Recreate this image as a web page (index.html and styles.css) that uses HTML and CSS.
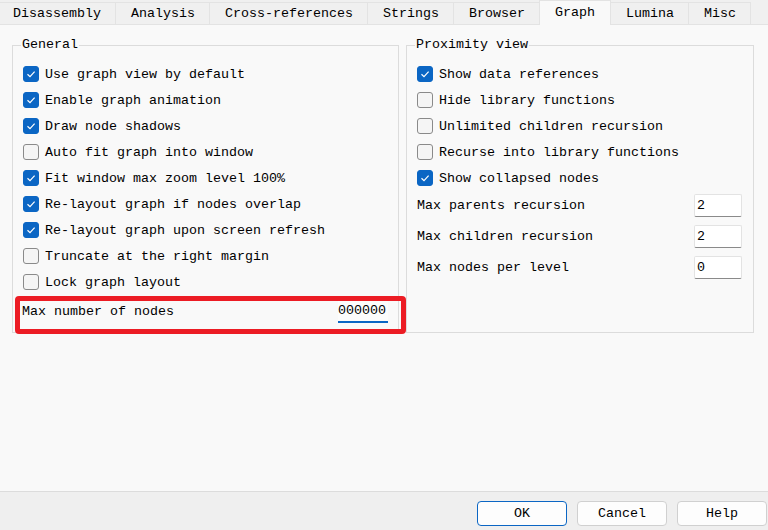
FILE: index.html
```html
<!DOCTYPE html>
<html>
<head>
<meta charset="utf-8">
<link rel="stylesheet" href="styles.css">
</head>
<body>
<div class="dialog">
  <div class="tabs">
    <div class="tab">Disassembly</div>
    <div class="tab">Analysis</div>
    <div class="tab">Cross-references</div>
    <div class="tab">Strings</div>
    <div class="tab">Browser</div>
    <div class="tab active">Graph</div>
    <div class="tab">Lumina</div>
    <div class="tab">Misc</div>
  </div>
  <div class="panel">
    <div class="groups">
      <fieldset class="group">
        <legend>General</legend>
        <div class="rows left-rows">
          <div class="row"><span class="cb on"><svg viewBox="0 0 16 16"><path d="M4.5 8.2 L7 10.6 L11.6 5.6"/></svg></span><span>Use graph view by default</span></div>
          <div class="row"><span class="cb on"><svg viewBox="0 0 16 16"><path d="M4.5 8.2 L7 10.6 L11.6 5.6"/></svg></span><span>Enable graph animation</span></div>
          <div class="row"><span class="cb on"><svg viewBox="0 0 16 16"><path d="M4.5 8.2 L7 10.6 L11.6 5.6"/></svg></span><span>Draw node shadows</span></div>
          <div class="row"><span class="cb"></span><span>Auto fit graph into window</span></div>
          <div class="row"><span class="cb on"><svg viewBox="0 0 16 16"><path d="M4.5 8.2 L7 10.6 L11.6 5.6"/></svg></span><span>Fit window max zoom level 100%</span></div>
          <div class="row"><span class="cb on"><svg viewBox="0 0 16 16"><path d="M4.5 8.2 L7 10.6 L11.6 5.6"/></svg></span><span>Re-layout graph if nodes overlap</span></div>
          <div class="row"><span class="cb on"><svg viewBox="0 0 16 16"><path d="M4.5 8.2 L7 10.6 L11.6 5.6"/></svg></span><span>Re-layout graph upon screen refresh</span></div>
          <div class="row"><span class="cb"></span><span>Truncate at the right margin</span></div>
          <div class="row"><span class="cb"></span><span>Lock graph layout</span></div>
          <div class="field-row highlight">
            <span class="field-label">Max number of nodes</span>
            <div class="edit"><span>1000000</span></div>
          </div>
        </div>
      </fieldset>
      <fieldset class="group">
        <legend>Proximity view</legend>
        <div class="rows right-rows">
          <div class="row"><span class="cb on"><svg viewBox="0 0 16 16"><path d="M4.5 8.2 L7 10.6 L11.6 5.6"/></svg></span><span>Show data references</span></div>
          <div class="row"><span class="cb"></span><span>Hide library functions</span></div>
          <div class="row"><span class="cb"></span><span>Unlimited children recursion</span></div>
          <div class="row"><span class="cb"></span><span>Recurse into library functions</span></div>
          <div class="row"><span class="cb on"><svg viewBox="0 0 16 16"><path d="M4.5 8.2 L7 10.6 L11.6 5.6"/></svg></span><span>Show collapsed nodes</span></div>
          <div class="spins">
            <div class="spin-row"><span>Max parents recursion</span><div class="spin">2</div></div>
            <div class="spin-row"><span>Max children recursion</span><div class="spin">2</div></div>
            <div class="spin-row"><span>Max nodes per level</span><div class="spin">0</div></div>
          </div>
        </div>
      </fieldset>
    </div>
  </div>
  <div class="buttons">
    <button class="btn default">OK</button>
    <button class="btn">Cancel</button>
    <button class="btn">Help</button>
  </div>
</div>
</body>
</html>
```
FILE: styles.css
```css
* { box-sizing: border-box; }
html, body {
  margin: 0;
  padding: 0;
  width: 768px;
  height: 530px;
  overflow: hidden;
  background: #efefef;
}
body {
  font-family: "Liberation Mono", "DejaVu Sans Mono", monospace;
  font-size: 13.333px;
  color: #000;
}
.dialog {
  display: flex;
  flex-direction: column;
  height: 530px;
}
.tabs {
  display: flex;
  align-items: flex-end;
  height: 24px;
  position: relative;
  z-index: 1;
  background: #f0f0f0;
}
.tab {
  height: 22px;
  line-height: 22px;
  padding: 0 14px 0 15px;
  background: #f0f0f0;
  border: 1px solid #e3e3e3;
  border-bottom: none;
  margin-left: -1px;
  white-space: nowrap;
}
.tab:first-child { margin-left: -2px; padding-left: 14px; }
.tab.active {
  height: 25px;
  line-height: 24px;
  background: #f9f9f9;
  padding: 0 15px;
  margin-bottom: -1px;
}
.panel {
  height: 468px;
  background: #f9f9f9;
  border-top: 1px solid #e3e3e3;
  border-bottom: 1px solid #dcdcdc;
  padding: 12px 14px 0 12px;
}
.groups {
  display: grid;
  grid-template-columns: 387px 348px;
  column-gap: 7px;
}
.group {
  margin: 0;
  padding: 0;
  min-width: 0;
  border: 1px solid #dcdcdc;
}
.group legend {
  margin-left: 8px;
  padding: 0 1px;
  line-height: 16px;
}
.rows {
  padding: 8px 0 8px 10px;
}
.row {
  display: flex;
  align-items: center;
  height: 26px;
  gap: 6px;
  white-space: nowrap;
}
.cb {
  width: 16px;
  height: 16px;
  flex: none;
  border-radius: 3px;
  background: #f5f5f5;
  border: 1px solid #8a8a8a;
  display: flex;
}
.cb.on {
  background: #0b66c4;
  border-color: #0b66c4;
}
.cb svg {
  width: 16px;
  height: 16px;
  margin: -1px;
}
.cb svg path {
  fill: none;
  stroke: #fff;
  stroke-width: 1.2;
}
.field-row {
  display: flex;
  align-items: center;
  justify-content: space-between;
  height: 26px;
  margin-top: 3px;
  margin-left: -1px;
  padding-right: 10px;
}
.highlight { position: relative; }
.highlight::after {
  content: "";
  position: absolute;
  left: -7px;
  right: -8px;
  top: -2px;
  bottom: -10px;
  border: 5px solid #ec1c24;
  border-radius: 4px;
  pointer-events: none;
}
.edit {
  width: 50px;
  height: 23px;
  display: flex;
  justify-content: flex-end;
  align-items: center;
  overflow: hidden;
  background: #fcfcfc;
  border-bottom: 2px solid #0b66c4;
  padding-right: 2px;
  padding-top: 1px;
}
.edit span { white-space: nowrap; flex: none; }
.spins {
  display: flex;
  flex-direction: column;
  gap: 8px;
  margin-top: 3px;
  padding-right: 11px;
}
.spin-row {
  display: flex;
  align-items: center;
  justify-content: space-between;
  height: 23px;
}
.spin {
  width: 48px;
  height: 23px;
  background: #fff;
  border: 1px solid #e3e3e3;
  border-bottom: 1px solid #8a8a8a;
  border-radius: 2px;
  padding-left: 2px;
  line-height: 21px;
}
.buttons {
  display: flex;
  justify-content: flex-end;
  gap: 10px;
  padding: 9px 1px 0 0;
}
.btn {
  width: 90px;
  height: 25px;
  font: inherit;
  color: #000;
  background: #fdfdfd;
  border: 1px solid #d0d0d0;
  border-radius: 4px;
  padding: 0;
}
.btn.default {
  border-color: #0b66c4;
}
```
